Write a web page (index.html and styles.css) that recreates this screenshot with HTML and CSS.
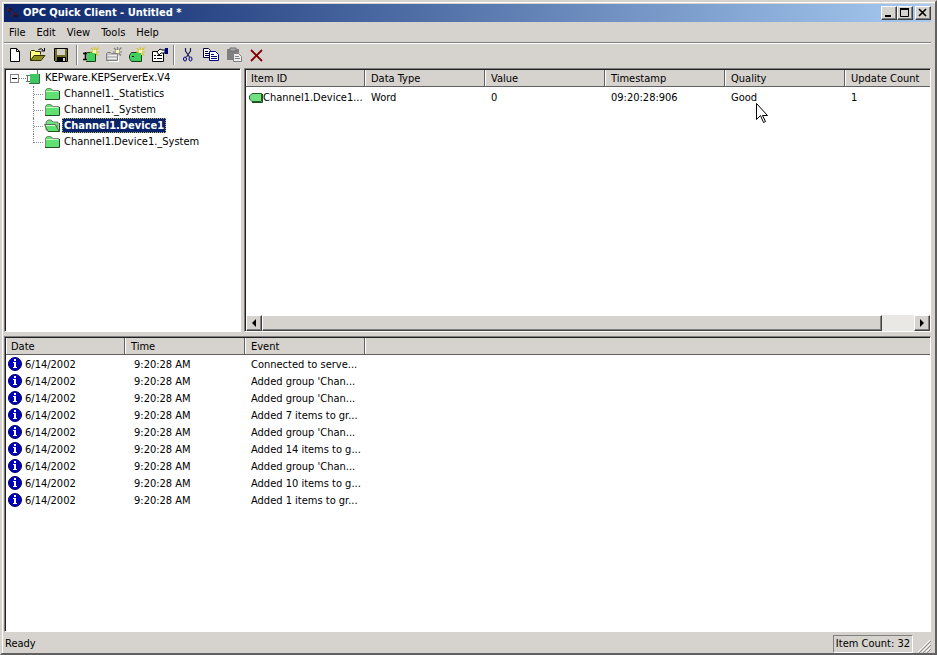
FILE: index.html
```html
<!DOCTYPE html>
<html lang="en">
<head>
<meta charset="utf-8">
<title>OPC Quick Client - Untitled *</title>
<link rel="stylesheet" href="styles.css">
</head>
<body>
<svg class="defs" aria-hidden="true">
  <symbol id="folder" viewBox="0 0 16 16"><path d="M1 13V4l2-2h4l2 2h6v9z" fill="#60e070"/><path d="M1.500 13V4.500l2-2h3l2 2h6" fill="none" stroke="#808080"/><path d="M2 5.500h12" stroke="#c8ffc8"/><path d="M1 13.500h14.500V5" fill="none" stroke="#205020"/></symbol>
  <symbol id="folder-open" viewBox="0 0 16 16"><path d="M2 12V4l2-2h3l2 2h5v9z" fill="#70e080" stroke="#708070"/><path d="M0.500 6.500h11l3.500 7H4z" fill="#60e070" stroke="#507050"/><path d="M2 7.500h9" stroke="#d8ffd8"/><path d="M4 13.500h11.500V5" fill="none" stroke="#205020"/></symbol>
  <symbol id="info" viewBox="0 0 14 14"><circle cx="7" cy="7" r="6.500" fill="#0000b8" stroke="#000070"/><path d="M6 2h2v2H6zM5 5h3v5h1v1H5v-1h1V6H5z" fill="#fff"/></symbol>
  <symbol id="spark" viewBox="0 0 9 9"><path d="M4.500 0v3M1 1l2.500 2.500M8.500.500L5.500 3.500M9 5H6M8 8.500L5.500 6M0 5h3" stroke="currentColor" stroke-width="1.200"/><path d="M3 3h3v3H3z" fill="#ffffb0"/></symbol>
</svg>
<main class="window">
  <header class="titlebar">
    <svg class="appicon" viewBox="0 0 16 16"><path d="M3 3h4v4H3zM8 8h5v4H8z" fill="#181830"/><path d="M2 5h3l3 4h5M5 11h3M3 2v4" fill="none" stroke="#601838"/></svg>
    <h1>OPC Quick Client - Untitled *</h1>
    <button class="capbtn" aria-label="Minimize"><svg viewBox="0 0 12 10"><path d="M2 8h6" stroke="#000" stroke-width="2"/></svg></button>
    <button class="capbtn" aria-label="Maximize"><svg viewBox="0 0 12 10"><path d="M1.500 1v7.500h8V1M1 1h9" fill="none" stroke="#000"/><path d="M1 1h9" stroke="#000" stroke-width="2"/></svg></button>
    <button class="capbtn close" aria-label="Close"><svg viewBox="0 0 12 10"><path d="M2 1l7 7M9 1L2 8" stroke="#000" stroke-width="1.600"/></svg></button>
  </header>
  <nav class="menubar"><button>File</button><button>Edit</button><button>View</button><button>Tools</button><button>Help</button></nav>
  <div class="toolbar">
    <button aria-label="New"><svg viewBox="0 0 16 16"><path d="M3.500 1.500h6l3 3v10h-9z" fill="#fff" stroke="#000"/><path d="M9.500 1.500v3h3" fill="none" stroke="#000"/></svg></button>
    <button aria-label="Open"><svg viewBox="0 0 16 16"><path d="M0.500 13.500v-9l1-1h3l1 1h5v3" fill="#ffff80" stroke="#303000"/><path d="M0.500 13.500l3.500-5h11l-4 5z" fill="#909020" stroke="#303000"/><path d="M8.500 2.500q3-2 5 1M14.500 1v3h-3" fill="none" stroke="#000"/></svg></button>
    <button aria-label="Save"><svg viewBox="0 0 16 16"><path d="M1.500 1.500h13v13h-12l-1-1z" fill="#707020" stroke="#000"/><path d="M4 2h8v6H4z" fill="#d4d0c8"/><path d="M4 10h9v4H4z" fill="#000"/><path d="M10 11h2v3h-2z" fill="#d4d0c8"/></svg></button>
    <i class="sep"></i>
    <button aria-label="New server"><svg viewBox="0 0 16 16"><path d="M0 6.500h4M2.500 5v8M0 12.500h4" stroke="#000" stroke-width="1.500" fill="none"/><path d="M4 6h8v8H4z" fill="#40d060"/><path d="M3 14.500h9.500V7M4 5.500h5" fill="none" stroke="#104010"/><use href="#spark" x="7" y="0" width="9" height="9" color="#d8c420"/></svg></button>
    <button aria-label="New group"><svg viewBox="0 0 16 16"><path d="M.5 13.500V6.500l1-1h3l1 1h6v7z" fill="#c0c0c0" stroke="#808080"/><path d="M2 8.500h9M2 11.500h9" stroke="#eee"/><path d="M3 14.500h9.500V9" fill="none" stroke="#fff"/><use href="#spark" x="7" y="0" width="9" height="9" color="#808080"/></svg></button>
    <button aria-label="New item"><svg viewBox="0 0 16 16"><path d="M3 6h9v8H3l-2-2V8z" fill="#40d060"/><path d="M.5 8.500l2-3h6M.5 8.500v3l2 3h10V8" fill="none" stroke="#104010"/><path d="M3 9.500h2" stroke="#000"/><use href="#spark" x="7" y="0" width="9" height="9" color="#d8c420"/></svg></button>
    <button aria-label="Properties"><svg viewBox="0 0 16 16"><path d="M.5 4.500h11v10H.5z" fill="#fff" stroke="#000"/><path d="M2 8.500h2M5 8.500h5M2 11.500h2M5 11.500h5" stroke="#000"/><path d="M5 5l3-3 2 1h3v3H9L7 8z" fill="#fff" stroke="#000"/><path d="M13 1h3v6h-3z" fill="#000080"/></svg></button>
    <i class="sep wide"></i>
    <button aria-label="Cut"><svg viewBox="0 0 16 16"><path d="M5.500 1v3l4 6M10.500 1v3l-4 6" fill="none" stroke="#202050" stroke-width="1.200"/><ellipse cx="5" cy="12" rx="1.500" ry="2" fill="none" stroke="#000080"/><ellipse cx="10.500" cy="12" rx="1.500" ry="2" fill="none" stroke="#000080"/></svg></button>
    <button aria-label="Copy"><svg viewBox="0 0 16 16"><path d="M.5 1.500h5l2 2v7h-7z" fill="#fff" stroke="#000040"/><path d="M2 4.500h3M2 6.500h4M2 8.500h4" stroke="#000040"/><path d="M6.500 4.500h6l3 3v6h-9z" fill="#fff" stroke="#000080"/><path d="M8 7.500h3M8 9.500h6M8 11.500h6" stroke="#000080"/></svg></button>
    <button aria-label="Paste"><svg viewBox="0 0 16 16"><path d="M1 2h12v11H1z" fill="#808080"/><path d="M4 1h6v3H4z" fill="#aaa" stroke="#707070"/><path d="M7.500 6.500h5l3 3v5h-8z" fill="#eee" stroke="#808080"/><path d="M9 9.500h4M9 11.500h5" stroke="#808080"/></svg></button>
    <button aria-label="Delete"><svg viewBox="0 0 16 16"><path d="M2 3l11 11M13 3L2 14" stroke="#800000" stroke-width="1.800"/></svg></button>
  </div>
  <div class="upper">
    <section class="pane tree" aria-label="Servers">
      <div class="root"><button class="toggle" aria-label="Collapse"><svg viewBox="0 0 7 7"><path d="M1 3.500h5" stroke="#000"/></svg></button><i class="stub"></i><svg class="ico" viewBox="0 0 16 16"><path d="M0 5.500h4M0 11.500h4M1.500 5v7M11.500 0v4" stroke="#508060"/><path d="M4 4h9v9H4z" fill="#40c860"/><path d="M3 13.500h10.500V4" fill="none" stroke="#307040"/></svg><span>KEPware.KEPServerEx.V4</span></div>
      <ul>
        <li><svg class="ico"><use href="#folder"/></svg><span>Channel1._Statistics</span></li>
        <li><svg class="ico"><use href="#folder"/></svg><span>Channel1._System</span></li>
        <li><svg class="ico"><use href="#folder-open"/></svg><span class="selected">Channel1.Device1</span></li>
        <li><svg class="ico"><use href="#folder"/></svg><span>Channel1.Device1._System</span></li>
      </ul>
    </section>
    <section class="pane items">
      <div class="clip">
      <table>
        <thead><tr><th>Item ID</th><th>Data Type</th><th>Value</th><th>Timestamp</th><th>Quality</th><th>Update Count</th></tr></thead>
        <tbody><tr><td class="first"><svg class="tag" viewBox="0 0 15 12"><path d="M4 1.500h9.500v8H4L1.500 7V4z" fill="#70e080" stroke="#206030"/><path d="M4 10.500h10.500V2" fill="none" stroke="#205020"/></svg>Channel1.Device1...</td><td>Word</td><td>0</td><td>09:20:28:906</td><td>Good</td><td>1</td></tr></tbody>
      </table>
      </div>
      <div class="scroll"><button aria-label="Scroll left"><svg viewBox="0 0 8 8"><path d="M6 0v8L2 4z"/></svg></button><div class="thumb"></div><div class="track"></div><button aria-label="Scroll right"><svg viewBox="0 0 8 8"><path d="M2 0v8l4-4z"/></svg></button></div>
    </section>
  </div>
  <section class="pane events">
    <table>
      <thead><tr><th>Date</th><th>Time</th><th>Event</th><th></th></tr></thead>
      <tbody>
        <tr><td class="first"><svg class="inf"><use href="#info"/></svg>6/14/2002</td><td class="time">9:20:28 AM</td><td>Connected to serve...</td><td></td></tr>
        <tr><td class="first"><svg class="inf"><use href="#info"/></svg>6/14/2002</td><td class="time">9:20:28 AM</td><td>Added group 'Chan...</td><td></td></tr>
        <tr><td class="first"><svg class="inf"><use href="#info"/></svg>6/14/2002</td><td class="time">9:20:28 AM</td><td>Added group 'Chan...</td><td></td></tr>
        <tr><td class="first"><svg class="inf"><use href="#info"/></svg>6/14/2002</td><td class="time">9:20:28 AM</td><td>Added 7 items to gr...</td><td></td></tr>
        <tr><td class="first"><svg class="inf"><use href="#info"/></svg>6/14/2002</td><td class="time">9:20:28 AM</td><td>Added group 'Chan...</td><td></td></tr>
        <tr><td class="first"><svg class="inf"><use href="#info"/></svg>6/14/2002</td><td class="time">9:20:28 AM</td><td>Added 14 items to g...</td><td></td></tr>
        <tr><td class="first"><svg class="inf"><use href="#info"/></svg>6/14/2002</td><td class="time">9:20:28 AM</td><td>Added group 'Chan...</td><td></td></tr>
        <tr><td class="first"><svg class="inf"><use href="#info"/></svg>6/14/2002</td><td class="time">9:20:28 AM</td><td>Added 10 items to g...</td><td></td></tr>
        <tr><td class="first"><svg class="inf"><use href="#info"/></svg>6/14/2002</td><td class="time">9:20:28 AM</td><td>Added 1 items to gr...</td><td></td></tr>
      </tbody>
    </table>
  </section>
  <footer class="status"><span>Ready</span><span class="count">Item Count: 32</span><svg class="grip" viewBox="0 0 14 14"><path d="M1 13L13 1M5 13l8-8M9 13l4-4" stroke="#fff"/><path d="M2 14L14 2M6 14l8-8M10 14l4-4" stroke="#909090"/></svg></footer>
  <svg class="cursor" viewBox="0 0 12 21"><path d="M.5.500v16l4-4 3 7 2-1-3-6h5z" fill="#fff" stroke="#000"/></svg>
</main>
</body>
</html>
```
FILE: styles.css
```css
* { box-sizing: border-box; }
body {
  margin: 0;
  background: #d6d2cd;
  color: #000;
  font: 11px/16px Tahoma, "DejaVu Sans Condensed", sans-serif;
}
button { font: inherit; color: inherit; border: 0; padding: 0; background: none; }
svg { display: block; flex: none; }
.defs { position: absolute; width: 0; height: 0; }
.window {
  position: relative;
  display: flex;
  flex-direction: column;
  height: 100vh;
  padding: 2px 4px 0 2px;
  border: 2px solid;
  border-color: #d6d2cd #606060 #606060 #d6d2cd;
  box-shadow: inset 1px 1px #fff;
}
.titlebar {
  display: flex;
  align-items: center;
  height: 18px;
  background: linear-gradient(to right, #0a246a, #a6caf0);
}
.titlebar h1 { flex: 1; margin: 0; color: #fff; font-size: 11px; font-weight: bold; }
.appicon { width: 16px; height: 16px; margin: 0 2px 0 1px; }
.capbtn {
  width: 16px;
  height: 14px;
  padding: 1px;
  background: #d6d2cd;
  border: 1px solid;
  border-color: #fff #404040 #404040 #fff;
  box-shadow: inset -1px -1px #808080;
}
.capbtn svg { width: 12px; height: 10px; }
.close { margin-left: 2px; }
.menubar { display: flex; gap: 11px; height: 21px; padding: 1px 5px 0; border-bottom: 1px solid #808080; }
.toolbar { display: flex; align-items: center; height: 25px; padding-bottom: 2px; border-top: 1px solid #fff; }
.toolbar button { width: 23px; height: 22px; padding: 3px; }
.toolbar svg { width: 16px; height: 16px; }
.sep { width: 2px; height: 20px; margin: 0 2px 0 3px; border-left: 1px solid #808080; border-right: 1px solid #fff; }
.wide { margin: 0 2px 0 1px; }
.pane {
  background: #fff;
  border: 1px solid;
  border-color: #808080 #fff #fff #808080;
  box-shadow: inset 1px 1px #202020;
  padding: 1px 0 0 1px;
  overflow: hidden;
}
.upper { display: flex; flex: none; height: 264px; gap: 3px; margin-bottom: 4px; }
.tree { flex: 0 0 237px; padding: 1px 2px; }
.root { display: flex; align-items: center; height: 16px; }
.toggle { width: 9px; height: 9px; margin-left: 3px; border: 1px solid #808080; }
.toggle svg { width: 7px; height: 7px; }
.stub { width: 7px; border-top: 1px dotted #808080; }
.root span { padding-left: 3px; }
.ico { width: 16px; height: 16px; }
.tree ul { list-style: none; margin: 0 0 0 26px; padding: 0; }
.tree li {
  display: flex;
  align-items: flex-start;
  height: 16px;
  padding-left: 10px;
  border-left: 1px dotted #808080;
  background: repeating-linear-gradient(to right, #909090 0 1px, #fff 1px 2px) 0 8px / 10px 1px no-repeat;
}
.tree li span { margin-left: 2px; padding: 0 2px; line-height: 15px; }
.tree li:last-child { height: 9px; }
.tree .selected { background: #0a246a; color: #fff; font-weight: bold; outline: 1px dotted #c0b070; outline-offset: -1px; }
.items { display: flex; flex: 1; flex-direction: column; min-width: 0; }
.clip { flex: 1; overflow: hidden; }
table { width: 100%; table-layout: fixed; border-collapse: separate; border-spacing: 0; }
th, td { width: 120px; height: 17px; padding: 0 6px; text-align: left; white-space: nowrap; font-weight: normal; line-height: 15px; }
th { padding-top: 1px; background: #d6d2cd; border-right: 1px solid #606060; border-bottom: 1px solid #606060; box-shadow: inset 1px 0 #fff; }
th:first-child { width: 119px; padding-left: 5px; }
th:last-child { width: auto; border-right: 0; }
.items tbody::before { content: ""; display: block; height: 2px; }
.events tbody::before { content: ""; display: block; height: 1px; }
.first { padding: 0 0 0 2px; }
.first svg { display: inline-block; vertical-align: middle; }
.tag { width: 15px; height: 12px; }
.inf { width: 14px; height: 14px; margin: 0 3px 1px 0; }
.time { padding-left: 9px; }
.scroll { display: flex; height: 16px; }
.scroll button, .thumb { background: #d6d2cd; border: 1px solid; border-color: #fff #404040 #404040 #fff; box-shadow: inset -1px -1px #808080; }
.scroll button { display: grid; flex: none; place-items: center; width: 16px; }
.scroll button svg { width: 8px; height: 8px; }
.thumb { flex: 95; }
.track { flex: 5; background: #eae8e4; }
.events { flex: 1; min-height: 0; }
.status { display: flex; align-items: center; height: 21px; padding: 2px 0 0 1px; }
.count { margin-left: auto; padding: 0 2px; border: 1px solid; border-color: #808080 #fff #fff #808080; }
.grip { width: 14px; height: 14px; margin-left: 4px; align-self: flex-end; }
.cursor { position: absolute; left: 754px; top: 101px; width: 12px; height: 21px; }
```
